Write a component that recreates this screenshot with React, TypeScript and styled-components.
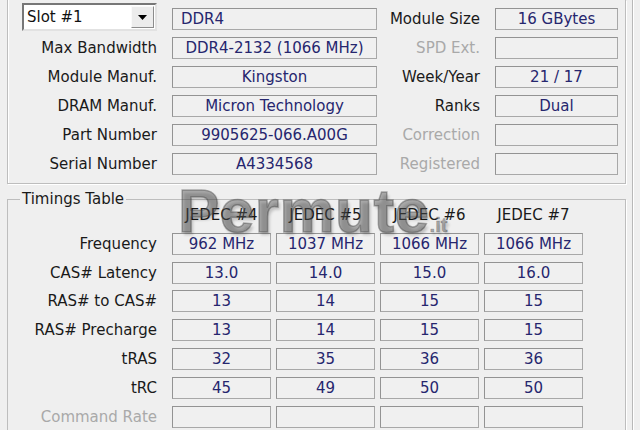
import React from 'react';
import styled, { createGlobalStyle } from 'styled-components';

const GlobalStyle = createGlobalStyle`
  html, body {
    margin: 0;
    padding: 0;
    background: #efefef;
  }
  body {
    width: 640px;
    height: 430px;
    overflow: hidden;
    font-family: "DejaVu Sans", Tahoma, sans-serif;
    font-size: 15px;
    color: #1a1a1a;
  }
`;

const Page = styled.div`
  position: relative;
  width: 633px;
  height: 430px;
  box-sizing: border-box;
  padding-left: 7px;
  border-right: 1px solid #b8b8b8;
  box-shadow: 1px 0 0 #fff;
`;

const ModuleGroup = styled.section`
  width: 619px;
  box-sizing: border-box;
  display: grid;
  grid-template-columns: 150px 205px 118px 123px;
  grid-auto-rows: 22px;
  row-gap: 7px;
  align-items: center;
  padding: 8px 0 8px 14px;
  border: 1px solid #bdbdbd;
  border-top: none;
  box-shadow: 1px 1px 0 #fff, inset 1px 0 0 #fff;
`;

const Label = styled.div<{ $disabled?: boolean; $pad?: number }>`
  text-align: right;
  padding-right: ${p => p.$pad ?? 15}px;
  white-space: nowrap;
  color: ${p => (p.$disabled ? '#a9a9a9' : '#1a1a1a')};
`;

const Field = styled.div<{ $left?: boolean }>`
  height: 22px;
  box-sizing: border-box;
  border: 1px solid #a8a8a8;
  border-top-color: #939393;
  border-left-color: #939393;
  background: #f0f0f0;
  color: #26266e;
  display: flex;
  align-items: center;
  justify-content: ${p => (p.$left ? 'flex-start' : 'center')};
  padding: 0 8px;
  white-space: nowrap;
  overflow: hidden;
`;

const Combo = styled.div`
  width: 135px;
  height: 28px;
  margin: -5px 0 -1px;
  box-sizing: border-box;
  background: #fff;
  border: 2px solid;
  border-color: #777 #e2e2e2 #e2e2e2 #777;
  display: flex;
  align-items: center;
  justify-content: space-between;
  padding-left: 3px;
  color: #111;
`;

const ComboButton = styled.div`
  width: 23px;
  height: 22px;
  margin-right: 1px;
  box-sizing: border-box;
  background: #ececec;
  border: 1px solid;
  border-color: #fafafa #8c8c8c #8c8c8c #fafafa;
  display: flex;
  align-items: center;
  justify-content: center;
`;

const TimingsGroup = styled.fieldset`
  width: 619px;
  box-sizing: border-box;
  margin: 6px 0 0;
  padding: 0 0 20px;
  min-inline-size: 0;
  border: 1px solid #bdbdbd;
  box-shadow: 1px 1px 0 #fff;
`;

const Legend = styled.legend`
  margin-left: 12px;
  padding: 0 2px;
  line-height: 18px;
  color: #1a1a1a;
`;

const TimingsGrid = styled.div`
  display: grid;
  grid-template-columns: 159px repeat(4, 99px);
  grid-template-rows: 18px;
  grid-auto-rows: 22px;
  column-gap: 5px;
  row-gap: 6.8px;
  align-items: center;
`;

const ColHead = styled.div`
  text-align: center;
  white-space: nowrap;
  color: #1a1a1a;
  line-height: 16px;
  margin-top: -4px;
`;

const Watermark = styled.div`
  position: absolute;
  left: 178px;
  top: 179px;
  font-family: "Liberation Sans", Arial, sans-serif;
  font-weight: bold;
  font-size: 62px;
  line-height: 64px;
  letter-spacing: 0.5px;
  color: rgba(85, 85, 85, 0.45);
  -webkit-text-stroke: 1.5px rgba(60, 60, 60, 0.4);
  text-shadow: 2px 3px 3px rgba(0, 0, 0, 0.2);
  pointer-events: none;
  white-space: nowrap;
`;

const WatermarkTld = styled.span`
  font-size: 20px;
  letter-spacing: 0;
  -webkit-text-stroke: 0.6px rgba(60, 60, 60, 0.4);
`;

const Arrow = () => (
  <svg width="9" height="5" viewBox="0 0 9 5">
    <polygon points="0,0 9,0 4.5,5" fill="#000" />
  </svg>
);

type Row = { label: string; value: string; right: string; rightValue: string; disabled?: boolean; rightDisabled?: boolean };

const rows: Row[] = [
  { label: 'Max Bandwidth', value: 'DDR4-2132 (1066 MHz)', right: 'SPD Ext.', rightValue: '', rightDisabled: true },
  { label: 'Module Manuf.', value: 'Kingston', right: 'Week/Year', rightValue: '21 / 17' },
  { label: 'DRAM Manuf.', value: 'Micron Technology', right: 'Ranks', rightValue: 'Dual' },
  { label: 'Part Number', value: '9905625-066.A00G', right: 'Correction', rightValue: '', rightDisabled: true },
  { label: 'Serial Number', value: 'A4334568', right: 'Registered', rightValue: '', rightDisabled: true },
];

const jedec = ['JEDEC #4', 'JEDEC #5', 'JEDEC #6', 'JEDEC #7'];

const timings: { label: string; values: string[]; disabled?: boolean }[] = [
  { label: 'Frequency', values: ['962 MHz', '1037 MHz', '1066 MHz', '1066 MHz'] },
  { label: 'CAS# Latency', values: ['13.0', '14.0', '15.0', '16.0'] },
  { label: 'RAS# to CAS#', values: ['13', '14', '15', '15'] },
  { label: 'RAS# Precharge', values: ['13', '14', '15', '15'] },
  { label: 'tRAS', values: ['32', '35', '36', '36'] },
  { label: 'tRC', values: ['45', '49', '50', '50'] },
  { label: 'Command Rate', values: ['', '', '', ''], disabled: true },
];

export default function App() {
  return (
    <Page>
      <GlobalStyle />
      <ModuleGroup>
        <Combo>
          <span>Slot #1</span>
          <ComboButton>
            <Arrow />
          </ComboButton>
        </Combo>
        <Field $left>DDR4</Field>
        <Label>Module Size</Label>
        <Field>16 GBytes</Field>
        {rows.map(r => (
          <React.Fragment key={r.label}>
            <Label $disabled={r.disabled}>{r.label}</Label>
            <Field>{r.value}</Field>
            <Label $disabled={r.rightDisabled}>{r.right}</Label>
            <Field>{r.rightValue}</Field>
          </React.Fragment>
        ))}
      </ModuleGroup>

      <TimingsGroup>
        <Legend>Timings Table</Legend>
        <TimingsGrid>
          <div />
          {jedec.map(j => (
            <ColHead key={j}>{j}</ColHead>
          ))}
          {timings.map(t => (
            <React.Fragment key={t.label}>
              <Label $disabled={t.disabled} $pad={10}>{t.label}</Label>
              {t.values.map((v, i) => (
                <Field key={i}>{v}</Field>
              ))}
            </React.Fragment>
          ))}
        </TimingsGrid>
      </TimingsGroup>

      <Watermark>
        Permute<WatermarkTld>.it</WatermarkTld>
      </Watermark>
    </Page>
  );
}
